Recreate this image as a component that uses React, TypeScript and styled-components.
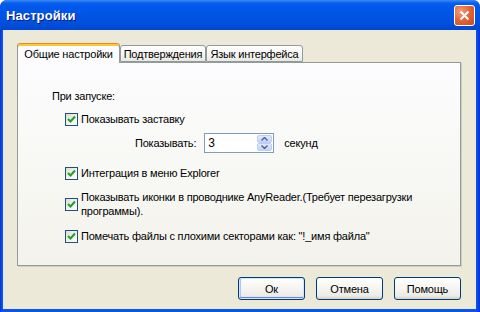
import React from "react";
import styled, { createGlobalStyle } from "styled-components";

const Global = createGlobalStyle`
  html, body { margin: 0; padding: 0; background: #ffffff; }
  body { font-family: "Liberation Sans", Arial, sans-serif; font-size: 11px; color: #000; letter-spacing: -0.2px; }
  * { box-sizing: border-box; }
`;

const Window = styled.div`
  width: 480px;
  height: 312px;
  display: flex;
  flex-direction: column;
  border-radius: 7px 7px 0 0;
  overflow: hidden;
  background: #0a4ee4;
`;

const TitleBar = styled.div`
  height: 30px;
  flex: none;
  display: flex;
  align-items: center;
  justify-content: space-between;
  padding: 1px 5px 0 6px;
  background: linear-gradient(
    to bottom,
    #3b8cf5 0px,
    #0a5fe9 3px,
    #0058ee 6px,
    #0054e3 16px,
    #004fdc 24px,
    #0047d0 30px
  );
`;

const Title = styled.span`
  color: #ffffff;
  font-family: "Liberation Sans", Arial, sans-serif;
  font-weight: bold;
  font-size: 13px;
  text-shadow: 1px 1px 0 #0a1883;
  letter-spacing: 0.1px;
`;

const CloseButton = styled.div`
  width: 21px;
  height: 21px;
  border: 1px solid #ffffff;
  border-radius: 3px;
  background: radial-gradient(circle at 30% 30%, #f5a07c 0%, #e4663c 45%, #cc471d 100%);
  display: flex;
  align-items: center;
  justify-content: center;
`;

const Frame = styled.div`
  flex: 1;
  display: flex;
  padding: 0 4px 4px 3px;
  background: linear-gradient(to right, #0831d9 0px, #0a55ea 2px, #0a55ea 476px, #0831d9 480px);
`;

const Client = styled.div`
  flex: 1;
  display: flex;
  flex-direction: column;
  background: #ece9d8;
  padding: 13px 15px 9px 14px;
`;

const TabStrip = styled.div`
  height: 19px;
  display: flex;
  align-items: flex-end;
  position: relative;
  z-index: 1;
`;

const Tab = styled.div<{ $active?: boolean; $w: number }>`
  width: ${(p) => p.$w}px;
  height: ${(p) => (p.$active ? 20 : 17)}px;
  margin-bottom: ${(p) => (p.$active ? -1 : 0)}px;
  border: 1px solid #919b9c;
  border-bottom: ${(p) => (p.$active ? "none" : "1px solid #919b9c")};
  border-top-color: ${(p) => (p.$active ? "#e68b2c" : "#919b9c")};
  border-radius: 3px 3px 0 0;
  background: ${(p) =>
    p.$active ? "#fcfcfe" : "linear-gradient(to bottom, #ffffff, #f3f2ee 70%, #e8e7e0)"};
  box-shadow: ${(p) => (p.$active ? "inset 0 2px 0 #ffc83c" : "none")};
  display: flex;
  align-items: center;
  justify-content: center;
  padding-top: ${(p) => (p.$active ? 1 : 0)}px;
  white-space: nowrap;
  line-height: 14px;
`;

const Panel = styled.div`
  height: 204px;
  flex: none;
  border: 1px solid #919b9c;
  box-shadow: 1px 1px 0 #d0cebf;
  background: linear-gradient(to bottom, #fcfcfe 0%, #f7f7f3 60%, #f3f2ec 100%);
  padding: 26px 12px 0 34px;
  display: flex;
  flex-direction: column;
`;

const Heading = styled.div`
  line-height: 14px;
`;

const CheckRow = styled.label<{ $top: number }>`
  margin-top: ${(p) => p.$top}px;
  margin-left: 13px;
  display: flex;
  align-items: center;
  gap: 3px;
`;

const CheckLabel = styled.span`
  line-height: 14px;
`;

const Box = styled.span`
  width: 13px;
  height: 13px;
  flex: none;
  border: 1px solid #1c5180;
  background: linear-gradient(135deg, #dcdcd7 0%, #f4f4f1 60%, #ffffff 100%);
  display: flex;
  align-items: center;
  justify-content: center;
`;

const SpinRow = styled.div`
  margin-top: 7px;
  margin-left: 83px;
  height: 20px;
  display: flex;
  align-items: center;
`;

const SpinLabel = styled.span`
  line-height: 14px;
  margin-right: 8px;
`;

const SpinBox = styled.div`
  width: 70px;
  height: 20px;
  border: 1px solid #7f9db9;
  background: #ffffff;
  display: flex;
  align-items: stretch;
  padding: 1px;
`;

const SpinValue = styled.span`
  flex: 1;
  padding-left: 2px;
  font-size: 12px;
  line-height: 16px;
`;

const SpinButtons = styled.div`
  width: 15px;
  display: flex;
  flex-direction: column;
`;

const SpinButton = styled.div`
  flex: 1;
  border: 1px solid #bccdf6;
  border-radius: 2px;
  background: linear-gradient(to bottom, #dfe8fd, #c3d3fb);
  display: flex;
  align-items: center;
  justify-content: center;
`;

const Unit = styled.span`
  margin-left: 10px;
  line-height: 14px;
`;

const ButtonRow = styled.div`
  margin-top: 11px;
  display: flex;
  justify-content: flex-end;
  gap: 11px;
`;

const Button = styled.div<{ $default?: boolean }>`
  width: 67px;
  height: 23px;
  border: 1px solid #003c74;
  border-radius: 3px;
  background: linear-gradient(to bottom, #ffffff 0%, #f5f4f0 50%, #ecebe6 85%, #d6d0c5 100%);
  box-shadow: ${(p) =>
    p.$default
      ? "inset 0 0 0 1px #cee7ff, inset 0 -1px 0 1px #6982ee, inset 1px 0 0 1px #a6c9f5"
      : "none"};
  display: flex;
  align-items: center;
  justify-content: center;
  line-height: 14px;
`;

const Check = () => (
  <svg width="9" height="9" viewBox="0 0 9 9">
    <path d="M1 4 L3.5 6.5 L8 1.5" stroke="#21a121" strokeWidth="2" fill="none" />
  </svg>
);

const CheckItem = ({ top, children }: { top: number; children: React.ReactNode }) => (
  <CheckRow $top={top}>
    <Box>
      <Check />
    </Box>
    <CheckLabel>{children}</CheckLabel>
  </CheckRow>
);

const Arrow = ({ up }: { up?: boolean }) => (
  <svg width="7" height="4" viewBox="0 0 7 4">
    <path
      d={up ? "M0.5 3.5 L3.5 0.5 L6.5 3.5" : "M0.5 0.5 L3.5 3.5 L6.5 0.5"}
      stroke="#4d6185"
      strokeWidth="1.4"
      fill="none"
    />
  </svg>
);

export default function App() {
  return (
    <>
      <Global />
      <Window>
        <TitleBar>
          <Title>Настройки</Title>
          <CloseButton>
            <svg width="11" height="11" viewBox="0 0 11 11">
              <path d="M1.5 1.5 L9.5 9.5 M9.5 1.5 L1.5 9.5" stroke="#ffffff" strokeWidth="2" />
            </svg>
          </CloseButton>
        </TitleBar>
        <Frame>
          <Client>
            <TabStrip>
              <Tab $active $w={103}>Общие настройки</Tab>
              <Tab $w={86}>Подтверждения</Tab>
              <Tab $w={97}>Язык интерфейса</Tab>
            </TabStrip>
            <Panel>
              <Heading>При запуске:</Heading>
              <CheckItem top={9}>Показывать заставку</CheckItem>
              <SpinRow>
                <SpinLabel>Показывать:</SpinLabel>
                <SpinBox>
                  <SpinValue>3</SpinValue>
                  <SpinButtons>
                    <SpinButton>
                      <Arrow up />
                    </SpinButton>
                    <SpinButton>
                      <Arrow />
                    </SpinButton>
                  </SpinButtons>
                </SpinBox>
                <Unit>секунд</Unit>
              </SpinRow>
              <CheckItem top={13}>Интеграция в меню Explorer</CheckItem>
              <CheckItem top={10}>
                Показывать иконки в проводнике AnyReader.(Требует перезагрузки
                <br />
                программы).
              </CheckItem>
              <CheckItem top={11}>Помечать файлы с плохими секторами как: "!_имя файла"</CheckItem>
            </Panel>
            <ButtonRow>
              <Button $default>Ок</Button>
              <Button>Отмена</Button>
              <Button>Помощь</Button>
            </ButtonRow>
          </Client>
        </Frame>
      </Window>
    </>
  );
}
